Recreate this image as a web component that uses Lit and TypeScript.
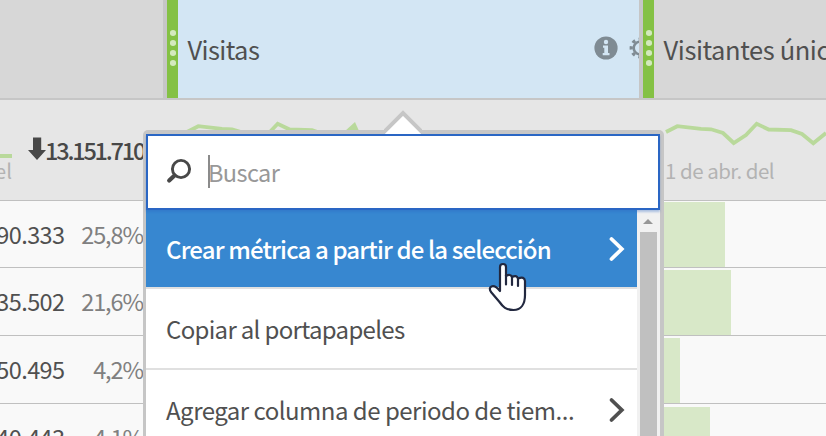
import { LitElement, html, svg, css } from "lit";
import { customElement, property } from "lit/decorators.js";

const TREND =
  "0,9 11.3,3.2 35,5.8 45,6.3 57,10 67.7,20 80,12 90.7,0.8 102.7,6.5 125,7.2 136,11 147.3,20.3 160,10";

const ROWS = [
  { value: "90.333", pct: "25,8%", bar: 61 },
  { value: "35.502", pct: "21,6%", bar: 67.5 },
  { value: "50.495", pct: "4,2%", bar: 16.5 },
  { value: "40.443", pct: "4,1%", bar: 46 },
];

const ITEMS = [
  { label: "Crear métrica a partir de la selección", kind: "active", more: true },
  { label: "Copiar al portapapeles", kind: "copy", more: false },
  { label: "Agregar columna de periodo de tiem...", kind: "period", more: true },
];

@customElement("column-grip")
export class ColumnGrip extends LitElement {
  static styles = css`
    :host {
      display: flex;
      flex-direction: column;
      align-items: center;
      box-sizing: border-box;
      width: 15px;
      height: 98px;
      padding: 30px 0 0 1px;
      gap: 4px;
      border-left: 4px solid #c6c6c6;
      background: #84c144;
      flex: none;
    }
    .dot {
      width: 6.5px;
      height: 6px;
      border-radius: 50%;
      background: #d3e9bd;
    }
  `;
  render() {
    return [0, 1, 2, 3].map(() => html`<span class="dot"></span>`);
  }
}

@customElement("context-menu")
export class ContextMenu extends LitElement {
  static styles = css`
    :host {
      display: block;
      box-sizing: border-box;
      width: 520.5px;
      height: 320px;
      padding: 4px 4px 0 3px;
      background: #c6c6c6;
      border-radius: 5px;
      color: #505050;
    }
    .search {
      display: flex;
      align-items: center;
      box-sizing: border-box;
      width: 513.5px;
      height: 76px;
      border: 2.5px solid #2a66c4;
      background: #fff;
      padding-left: 18px;
      position: relative;
      box-shadow: 0 2px 2px rgba(42, 102, 196, 0.35);
    }
    .glass { flex: none; width: 26px; height: 26px; margin-top: -2px; }
    .caret { width: 2px; height: 33px; background: #8b8b8b; margin-left: 16px; }
    .placeholder {
      font-size: 23.5px;
      line-height: 34px;
      color: #989898;
      letter-spacing: -0.6px;
      margin: 0 0 0 -2px;
    }
    .body { display: flex; height: 240px; background: #fff; }
    .items { width: 491px; }
    .item {
      display: flex;
      justify-content: space-between;
      align-items: center;
      box-sizing: border-box;
      height: 81px;
      padding: 2px 11px 0 20px;
      border-bottom: 2px solid #e0e0e0;
      font-size: 24px;
      line-height: 34px;
      white-space: nowrap;
    }
    .active {
      height: 79px;
      background: #3787d0;
      background-clip: padding-box;
      color: #fff;
      font-weight: 500;
    }
    .active .label { letter-spacing: -0.85px; }
    .copy .label { letter-spacing: -0.68px; }
    .period .label { letter-spacing: -0.5px; }
    .chevron { width: 18px; height: 26px; flex: none; }
    .scroll {
      display: flex;
      flex-direction: column;
      align-items: center;
      box-sizing: border-box;
      width: 22.5px;
      padding: 9px 0 0;
      background: #f1f1f1;
    }
    .up {
      border: 5px solid transparent;
      border-top: 0;
      border-bottom: 5px solid #969696;
    }
    .thumb { width: 17px; flex: 1; margin-top: 8px; background: #c0c0c0; }
    .tip { position: absolute; left: 241px; top: -20px; width: 38px; height: 24px; }
  `;
  render() {
    return html`
      <div class="search">
        <svg class="glass" viewBox="0 0 26 26">
          <circle cx="15" cy="11" r="8.6" fill="none" stroke="#484848" stroke-width="2.9" />
          <path d="M8.5 17.5L3.2 22.5" stroke="#484848" stroke-width="4.2" stroke-linecap="round" />
        </svg>
        <span class="caret"></span><span class="placeholder">Buscar</span>
      </div>
      <div class="body">
        <div class="items">
          ${ITEMS.map(
            (i) => html`<div class="item ${i.kind}">
              <span class="label">${i.label}</span>
              ${i.more
                ? html`<svg class="chevron" viewBox="0 0 18 26">
                    <path d="M3.5 3L13.8 13L3.5 23" fill="none" stroke="currentColor" stroke-width="3.8" stroke-linecap="round" />
                  </svg>`
                : null}
            </div>`
          )}
        </div>
        <div class="scroll"><span class="up"></span><span class="thumb"></span></div>
      </div>
      <svg class="tip" viewBox="0 0 38 24">
        <path d="M0 22L19 3L38 22V24H0Z" fill="#fff" />
        <path d="M-1 23L19 3L39 23" fill="none" stroke="#c6c6c6" stroke-width="4" />
      </svg>
    `;
  }
}

@customElement("trend-line")
export class TrendLine extends LitElement {
  @property({ type: Boolean }) peak = false;
  static styles = css`
    :host { display: block; height: 26px; }
    .line { display: block; width: 174px; height: 26px; overflow: visible; }
  `;
  render() {
    return html`<svg class="line" viewBox="0 0 174 26">
      <polyline points=${TREND} fill="none" stroke="#b9d99b" stroke-width="3.8" stroke-linejoin="miter" />
      ${this.peak ? svg`<path d="M158 8L168 -1L172 8Z" fill="#b9d99b" />` : null}
    </svg>`;
  }
}

@customElement("app-root")
export class AppRoot extends LitElement {
  static styles = css`
    :host {
      display: block;
      position: relative;
      width: 826px;
      height: 436px;
      overflow: hidden;
      background: #f9f9f9;
      color: #505050;
      font-family: "Noto Sans CJK SC", "Noto Sans", sans-serif;
      white-space: nowrap;
    }
    .header {
      display: flex;
      height: 98px;
      background: #d7d7d7;
      border-bottom: 2px solid #c6c6c6;
    }
    .blank { width: 163px; flex: none; }
    .head {
      display: flex;
      align-items: center;
      box-sizing: border-box;
      padding-left: 9.5px;
      overflow: hidden;
    }
    .selected { width: 461px; background: #d3e6f4; flex: none; }
    .rest { width: 172px; flex: none; }
    .name { font-size: 25.5px; line-height: 38px; letter-spacing: -0.6px; margin-top: -1px; }
    .unique { letter-spacing: -0.4px; }
    .tools { display: flex; margin-left: auto; gap: 10px; width: 45px; margin-top: -3px; flex: none; }
    .info, .gear { width: 24px; height: 24px; flex: none; }
    .summary {
      display: flex;
      box-sizing: border-box;
      height: 101px;
      background: #e6e6e6;
      border-bottom: 1px solid #c0c0c0;
    }
    .total { display: flex; width: 187px; flex: none; }
    .tail { width: 12px; padding-top: 54px; flex: none; }
    .stub { height: 4px; background: #b9d99b; }
    .date { font-size: 20.5px; line-height: 28px; color: #b3b3b3; }
    .tail .date { display: flex; justify-content: flex-end; margin-top: -2px; }
    .arrow { width: 18px; height: 24px; margin: 37px 0 0 16px; flex: none; }
    .sum { font-size: 23.5px; line-height: 34px; font-weight: 500; color: #484848; padding-top: 33px; letter-spacing: -2.2px; margin-left: -1px; }
    .mid { width: 479px; padding-top: 23px; flex: none; }
    .end { padding-top: 23px; }
    .end .date { margin: 7px 0 0 -1px; letter-spacing: -0.5px; }
    .row { display: flex; align-items: center; box-sizing: border-box; height: 68.2px; border-bottom: 1px solid #c0c0c0; }
    .first { height: 67px; }
    .value, .pct {
      display: flex;
      justify-content: flex-end;
      font-size: 23.5px;
      line-height: 34px;
      letter-spacing: -0.6px;
      margin-top: -1px;
    }
    .value { width: 64.5px; }
    .pct { width: 78.5px; color: #808080; letter-spacing: -1.1px; }
    .bar { height: 65px; margin-left: 520.5px; background: #d8e8c8; align-self: flex-end; }
    .menu { position: absolute; left: 143px; top: 129.5px; }
    .pointer { position: absolute; left: 488px; top: 262px; width: 40px; height: 50px; }
  `;
  render() {
    return html`
      <div class="header">
        <div class="blank"></div>
        <column-grip></column-grip>
        <div class="head selected">
          <span class="name">Visitas</span>
          <span class="tools">
            <svg class="info" viewBox="0 0 24 24">
              <circle cx="12" cy="12" r="11.6" fill="#7f8b93" />
              <circle cx="12" cy="6" r="2.2" fill="#d3e6f4" />
              <path d="M9 9.6H14V17H15.5V19.3H8.7V17H10.3V11.8H9Z" fill="#d3e6f4" />
            </svg>
            <svg class="gear" viewBox="0 0 24 24">
              <circle cx="12" cy="12" r="6.3" fill="none" stroke="#7f8b93" stroke-width="2.6" />
              <circle cx="12" cy="12" r="8.8" fill="none" stroke="#7f8b93" stroke-width="3.2" stroke-dasharray="3.2 3.71" stroke-dashoffset="1.6" />
            </svg>
          </span>
        </div>
        <column-grip></column-grip>
        <div class="head rest"><span class="name unique">Visitantes únicos</span></div>
      </div>
      <div class="summary">
        <div class="total">
          <div class="tail"><div class="stub"></div><span class="date">el</span></div>
          <svg class="arrow" viewBox="0 0 18 24"><path d="M5 0.5H13.2V13H18L9 23L0 13H5Z" fill="#484848" /></svg>
          <span class="sum">13.151.710</span>
        </div>
        <div class="mid"><trend-line peak></trend-line></div>
        <div class="end"><trend-line></trend-line><div class="date">1 de abr. del</div></div>
      </div>
      ${ROWS.map(
        (r, n) => html`<div class="row ${n === 0 ? "first" : ""}">
          <span class="value">${r.value}</span>
          <span class="pct">${r.pct}</span>
          <span class="bar" style="width:${r.bar}px"></span>
        </div>`
      )}
      <context-menu class="menu"></context-menu>
      <svg class="pointer" viewBox="0 0 40 50">
        <path
          d="M12 29V5Q12 2 15 2Q18 2 18 5V14Q22.5 11.5 24 15Q28.5 12.5 30 16.5Q36.5 14 37 19V33C37 42 33 48 25.5 48C18 48 15 45 11.5 40L3 30Q0.5 26 3.5 24.5Q7 23 12 29Z"
          fill="#fff" stroke="#22283f" stroke-width="2.2" stroke-linejoin="round" />
        <path d="M18 13V22.5M24 15V23M30 17V24" stroke="#22283f" stroke-width="2.2" stroke-linecap="round" />
      </svg>
    `;
  }
}
